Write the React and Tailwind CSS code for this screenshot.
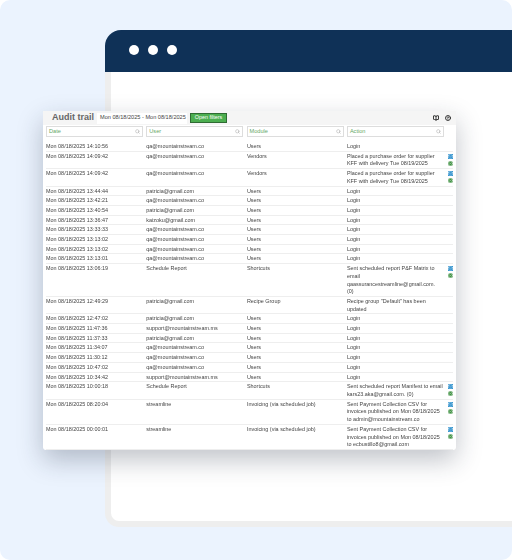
import { Search, Mail, CircleCheck, BookOpen, CircleHelp } from "lucide-react";

const QA = "qa@mountainstream.co";
const PAT = "patricia@gmail.com";
const SUP = "support@mountainstream.ms";

const rows = [
  ["14:10:56", QA, "Users", ["Login"]],
  ["14:09:42", QA, "Vendors", ["Placed a purchase order for supplier", "KFF with delivery Tue 08/19/2025"], true],
  ["14:09:42", QA, "Vendors", ["Placed a purchase order for supplier", "KFF with delivery Tue 08/19/2025"], true],
  ["13:44:44", PAT, "Users", ["Login"]],
  ["13:42:21", QA, "Users", ["Login"]],
  ["13:40:54", PAT, "Users", ["Login"]],
  ["13:36:47", "kaizoku@gmail.com", "Users", ["Login"]],
  ["13:33:33", QA, "Users", ["Login"]],
  ["13:13:02", QA, "Users", ["Login"]],
  ["13:13:02", QA, "Users", ["Login"]],
  ["13:13:01", QA, "Users", ["Login"]],
  ["13:06:19", "Schedule Report", "Shortcuts", ["Sent scheduled report P&F Matrix to", "email", "qaassurancestreamline@gmail.com.", "(0)"], true],
  ["12:49:29", PAT, "Recipe Group", ["Recipe group \"Default\" has been", "updated"]],
  ["12:47:02", PAT, "Users", ["Login"]],
  ["11:47:36", SUP, "Users", ["Login"]],
  ["11:37:33", PAT, "Users", ["Login"]],
  ["11:34:07", QA, "Users", ["Login"]],
  ["11:30:12", QA, "Users", ["Login"]],
  ["10:47:02", QA, "Users", ["Login"]],
  ["10:34:42", SUP, "Users", ["Login"]],
  ["10:00:18", "Schedule Report", "Shortcuts", ["Sent scheduled report Manifest to email", "kars23.aka@gmail.com. (0)"], true],
  ["08:20:04", "streamline", "Invoicing (via scheduled job)", ["Sent Payment Collection CSV for", "invoices published on Mon 08/18/2025", "to admin@mountainstream.co"], true],
  ["00:00:01", "streamline", "Invoicing (via scheduled job)", ["Sent Payment Collection CSV for", "invoices published on Mon 08/18/2025", "to ecbustillo8@gmail.com"], true],
];

const filters = ["Date", "User", "Module", "Action"];

function RowIcons() {
  return (
    <div className="flex flex-col items-center gap-[2px] pt-[1px]">
      <span className="w-[5px] h-[5px] bg-[#1c87c9] flex items-center justify-center">
        <Mail className="w-[5px] h-[5px] text-white" strokeWidth={2} />
      </span>
      <span className="w-[5px] h-[5px] rounded-full bg-[#3f9142] flex items-center justify-center">
        <CircleCheck className="w-[5px] h-[5px] text-white" strokeWidth={2} />
      </span>
    </div>
  );
}

export default function App() {
  return (
    <div className="w-[512px] h-[560px] bg-white font-['Liberation_Sans',Arial,sans-serif] overflow-hidden">
      <div className="relative w-full h-full bg-[#ebf3fe] rounded-[10px] overflow-hidden pt-[30px] pl-[105px]">
        {/* browser window */}
        <div className="h-[497px] flex flex-col">
          <div className="h-[42px] bg-[#0f3157] rounded-tl-[16px] flex items-center gap-[9px] pl-[24px] pb-[2px]">
            <span className="w-[10px] h-[10px] rounded-full bg-white" />
            <span className="w-[10px] h-[10px] rounded-full bg-white" />
            <span className="w-[10px] h-[10px] rounded-full bg-white" />
          </div>
          <div className="flex-1 bg-white border-l-[6px] border-b-[6px] border-[#eeeeee] rounded-bl-[14px]" />
        </div>

        {/* audit trail card laid over the window */}
        <div className="absolute left-[43px] top-[111px] w-[413px] h-[339px] bg-white rounded-[3px] shadow-[0_10px_26px_rgba(30,40,60,0.28)] text-[5.45px] leading-[7.7px] text-[#444444] px-[3px] blur-[0.25px]">
          <div className="h-[14px] flex items-center bg-[#f5f5f5] -mx-[3px] pl-[9px] pr-[5px]">
            <span className="w-[45px] text-[9px] font-bold text-[#666666]">Audit trail</span>
            <span className="w-[90px] h-[11px] bg-white flex items-center pl-[3px] text-[5.6px]">Mon 08/18/2025 - Mon 08/18/2025</span>
            <span className="ml-[3px] w-[37px] h-[10px] bg-[#4cae50] border border-[#2f6b33] text-white flex items-center justify-center text-[5.4px]">Open filters</span>
            <span className="ml-auto flex items-center gap-[6px]">
              <BookOpen className="w-[6px] h-[6px] text-[#222222]" strokeWidth={3.5} />
              <CircleHelp className="w-[6px] h-[6px] text-[#222222]" strokeWidth={3.5} />
            </span>
          </div>
          <div className="grid grid-cols-[97px_97px_97px_97px] gap-x-[3.3px] pt-[1px] h-[17px]">
            {filters.map((f) => (
              <div key={f} className="h-[11px] border border-[#dddddd] bg-white flex items-center justify-between px-[2px] text-[5.6px] text-[#66a866]">
                {f}
                <Search className="w-[5px] h-[5px] text-[#999999]" />
              </div>
            ))}
          </div>
          <div className="flex flex-col">
            {rows.map((r, i) => (
              <div key={i} className="grid grid-cols-[100.3px_100.6px_100px_101px_1fr] border-b border-[#eeeeee] pt-[1px]">
                <div className="whitespace-nowrap">Mon 08/18/2025 {r[0]}</div>
                <div>{r[1]}</div>
                <div className="whitespace-nowrap">{r[2]}</div>
                <div>
                  {r[3].map((l) => (
                    <div key={l} className="whitespace-nowrap">{l}</div>
                  ))}
                </div>
                <div className="flex justify-center">{r[4] && <RowIcons />}</div>
              </div>
            ))}
          </div>
        </div>
      </div>
    </div>
  );
}
